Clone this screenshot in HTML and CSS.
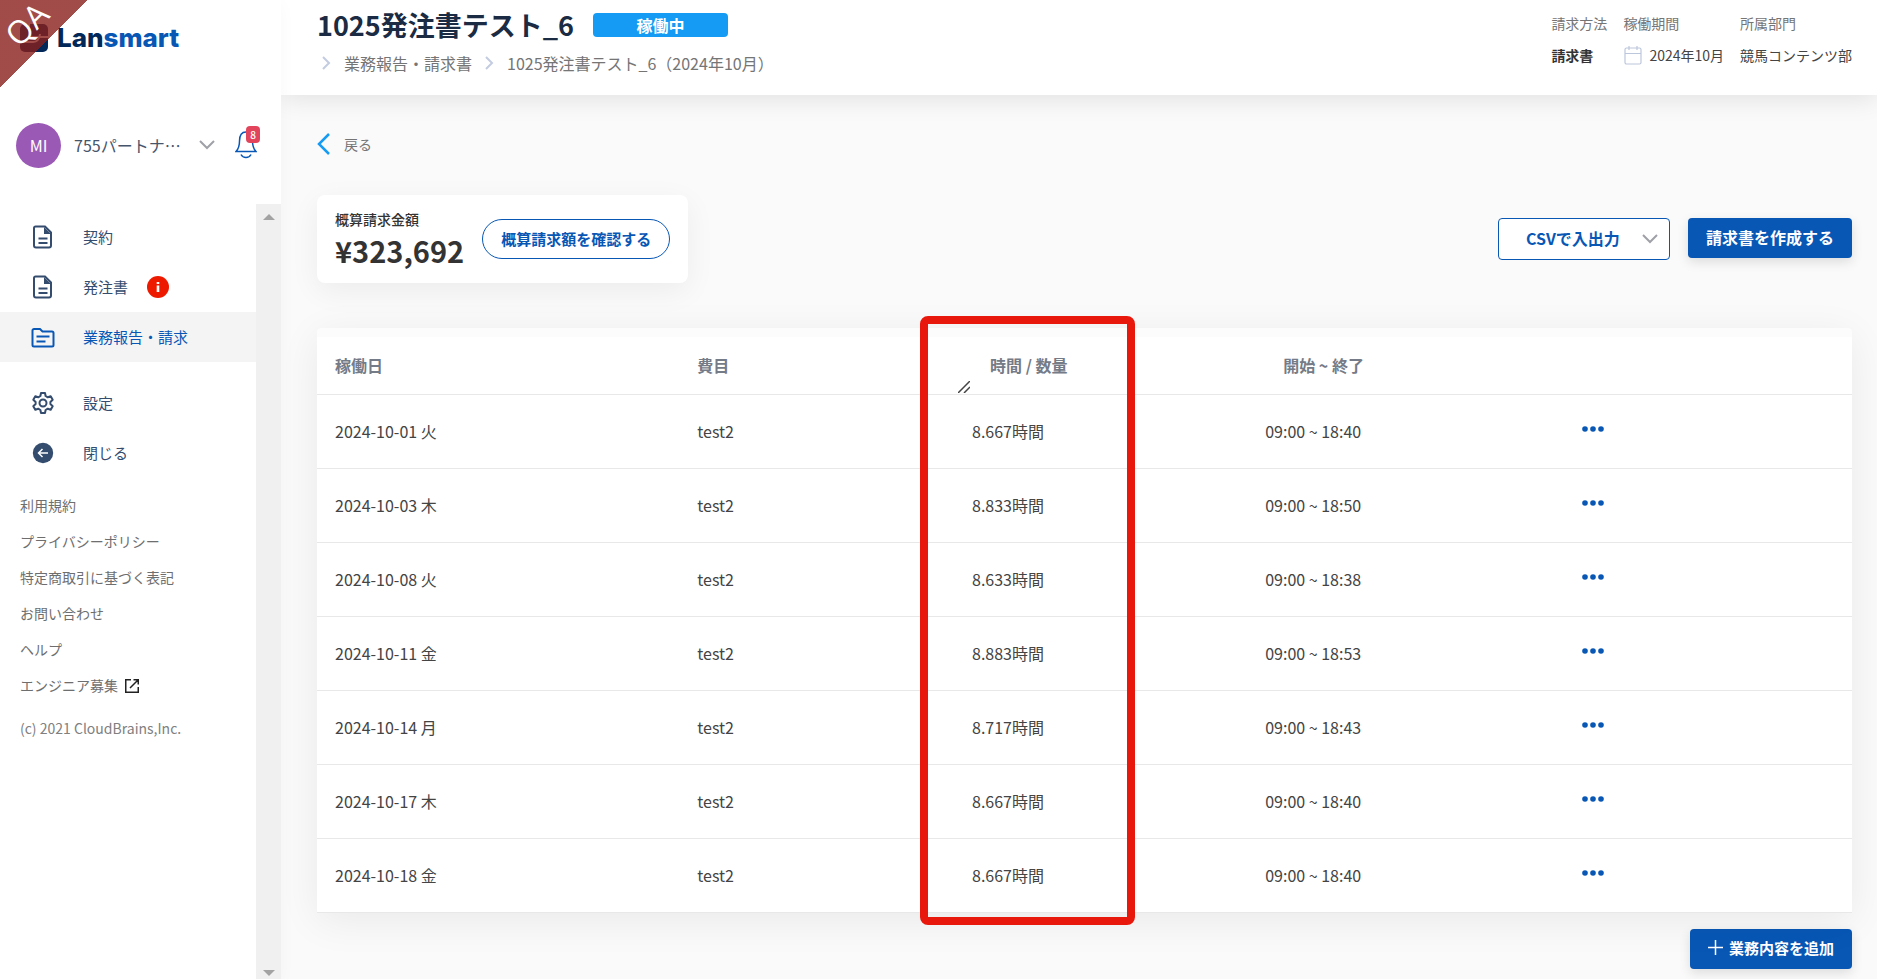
FILE: index.html
```html
<!DOCTYPE html>
<html lang="ja">
<head>
	<meta charset="utf-8">
	<title>1025発注書テスト_6 | Lansmart</title>
	<link rel="stylesheet" href="styles.css">
</head>
<body>

<div class="ribbon"><span class="ribbon-text">QA</span></div>

<div class="layout">

<aside class="sidebar">
	<div class="sidebar-top">
		<a class="logo" href="#">
			<svg width="28" height="28" viewBox="0 0 28 28"><rect width="28" height="28" rx="5" fill="#022859"/><path d="M9 0v9q0 4 4 4h15M0 18h13q6 0 7-8" fill="none" stroke="#fff" stroke-width="2"/></svg>
			<span class="logo-text">Lan<span class="logo-blue">smart</span></span>
		</a>
		<div class="user">
			<span class="avatar">MI</span>
			<button class="user-name" type="button">
				<span>755パートナ…</span>
				<svg width="16" height="10" viewBox="0 0 16 10"><path d="M1 1l7 7 7-7" fill="none" stroke="#a0a0a8" stroke-width="2"/></svg>
			</button>
			<button class="bell" type="button" aria-label="通知">
				<svg width="22" height="28" viewBox="0 0 22 28" fill="none" stroke="#0857b5" stroke-width="1.5"><path d="M1 20.500h20c-2.500-2.500-3.500-5-3.500-10.500C17.500 4 15 1 11 1S4.500 4 4.500 10c0 5.500-1 8-3.500 10.500z"/><path d="M6 23.500c2 4 8 4 10 0"/></svg>
				<span class="bell-count">8</span>
			</button>
		</div>
	</div>

	<div class="sidebar-scroll">
		<div class="sidebar-content">
			<nav class="nav">
				<a class="nav-item" href="#">
					<svg class="nav-icon" viewBox="0 0 24 24"><path d="M4.500 1.500h9.500l6 6v13a2 2 0 0 1-2 2H5a2 2 0 0 1-2-2V3a1.500 1.500 0 0 1 1.500-1.500z" fill="none" stroke="currentColor" stroke-width="2"/><path d="M13 2v7h7zM7.500 12.500h9v2h-9zM7.500 17h9v2h-9z" fill="currentColor"/></svg>
					契約
				</a>
				<a class="nav-item" href="#">
					<svg class="nav-icon" viewBox="0 0 24 24"><path d="M4.500 1.500h9.500l6 6v13a2 2 0 0 1-2 2H5a2 2 0 0 1-2-2V3a1.500 1.500 0 0 1 1.500-1.500z" fill="none" stroke="currentColor" stroke-width="2"/><path d="M13 2v7h7zM7.500 12.500h9v2h-9zM7.500 17h9v2h-9z" fill="currentColor"/></svg>
					発注書
					<svg class="nav-info" viewBox="0 0 22 22"><circle cx="11" cy="11" r="11" fill="#ee1a00"/><path d="M9.700 6h2.600v2H9.700zM9.700 9.500h2.600V16H9.700z" fill="#fff"/></svg>
				</a>
				<a class="nav-item active" href="#">
					<svg class="nav-icon" viewBox="0 0 24 24"><path d="M3 4h6l2.500 2.500H21a1.500 1.500 0 0 1 1.500 1.500v12a1.500 1.500 0 0 1-1.500 1.500H3A1.500 1.500 0 0 1 1.500 20V5.500A1.500 1.500 0 0 1 3 4z" fill="none" stroke="currentColor" stroke-width="2"/><path d="M5.500 10.500h13v2h-13zM5.500 15.500h9v2h-9z" fill="currentColor"/></svg>
					業務報告・請求
				</a>
			</nav>
			<nav class="nav">
				<a class="nav-item" href="#">
					<svg class="nav-icon" viewBox="0 0 24 24" fill="none" stroke="currentColor" stroke-width="2" stroke-linejoin="round"><path d="M10 2h4l.6 3 2.200 1.300 2.900-1 2 3.500L19.400 11v2l2.300 2.200-2 3.500-2.900-1-2.200 1.300-.6 3h-4l-.6-3-2.200-1.300-2.900 1-2-3.500L4.600 13v-2L2.300 8.800l2-3.500 2.900 1L9.400 5z"/><circle cx="12" cy="12" r="3.500"/></svg>
					設定
				</a>
				<button class="nav-item" type="button">
					<svg class="nav-icon" viewBox="0 0 24 24"><circle cx="12" cy="12" r="10.200" fill="currentColor"/><path d="M17 12H8M11.500 8l-4 4 4 4" fill="none" stroke="#fff" stroke-width="1.500"/></svg>
					閉じる
				</button>
			</nav>
			<ul class="links">
				<li><a href="#">利用規約</a></li>
				<li><a href="#">プライバシーポリシー</a></li>
				<li><a href="#">特定商取引に基づく表記</a></li>
				<li><a href="#">お問い合わせ</a></li>
				<li><a href="#">ヘルプ</a></li>
				<li><a href="#">エンジニア募集 <svg width="14" height="14" viewBox="0 0 14 14" fill="none" stroke="#222" stroke-width="1.500"><path d="M6 .75H.75v12.500h12.500V8M8.500.75h4.750V5.500M13 1L5 9"/></svg></a></li>
			</ul>
			<p class="copyright">(c) 2021 CloudBrains,Inc.</p>
		</div>
		<div class="scrollbar">
			<svg width="12" height="6" viewBox="0 0 12 6"><path d="M0 6l6-6 6 6z" fill="#a3a3a3"/></svg>
			<svg width="12" height="6" viewBox="0 0 12 6"><path d="M0 0l6 6 6-6z" fill="#a3a3a3"/></svg>
		</div>
	</div>
</aside>

<main class="main">
	<header class="page-header">
		<div>
			<div class="title-row">
				<h1 class="title">1025発注書テスト_6</h1>
				<span class="status">稼働中</span>
			</div>
			<div class="breadcrumb">
				<svg width="9" height="14" viewBox="0 0 9 14"><path d="M1 1l6 6-6 6" fill="none" stroke="#c3cce0" stroke-width="2"/></svg>
				<a href="#">業務報告・請求書</a>
				<svg width="9" height="14" viewBox="0 0 9 14"><path d="M1 1l6 6-6 6" fill="none" stroke="#c3cce0" stroke-width="2"/></svg>
				<a href="#">1025発注書テスト_6（2024年10月）</a>
			</div>
		</div>
		<dl class="meta">
			<div>
				<dt>請求方法</dt>
				<dd class="bold">請求書</dd>
			</div>
			<div>
				<dt>稼働期間</dt>
				<dd><svg width="20" height="20" viewBox="0 0 20 20" fill="none" stroke="#bcc6dc" stroke-width="1.200"><rect x="2" y="3" width="16" height="16" rx="1.500"/><path d="M2 8.500h16M6 1v4M14 1v4"/></svg>2024年10月</dd>
			</div>
			<div>
				<dt>所属部門</dt>
				<dd>競馬コンテンツ部</dd>
			</div>
		</dl>
	</header>

	<div class="content">
		<a class="back" href="#">
			<svg width="13" height="22" viewBox="0 0 13 22"><path d="M12 1L2 11l10 10" fill="none" stroke="#159bf3" stroke-width="2.500"/></svg>
			戻る
		</a>

		<div class="summary">
			<div class="amount-card">
				<div>
					<div class="amount-label">概算請求金額</div>
					<div class="amount">¥323,692</div>
				</div>
				<button class="btn-pill" type="button">概算請求額を確認する</button>
			</div>
			<div class="actions">
				<div class="csv">
					<select class="csv-select" aria-label="CSVで入出力">
						<option>CSVで入出力</option>
					</select>
					<svg class="csv-arrow" width="16" height="10" viewBox="0 0 16 10"><path d="M1 1l7 7 7-7" fill="none" stroke="#a0a0a8" stroke-width="2"/></svg>
				</div>
				<button class="btn" type="button">請求書を作成する</button>
			</div>
		</div>

		<div class="table-card">
			<table class="table">
				<colgroup>
					<col class="col-date">
					<col class="col-item">
					<col class="col-hours">
					<col class="col-time">
					<col>
				</colgroup>
				<thead>
					<tr>
						<th>稼働日</th>
						<th>費目</th>
						<th class="th-hours">
							<div class="th-inner">
								<svg width="12" height="12" viewBox="0 0 12 12"><path d="M0 12L12 0M6 12l6-6" stroke="#444" stroke-width="1.500"/></svg>
								時間 / 数量
							</div>
						</th>
						<th class="th-time">開始 ~ 終了</th>
						<th></th>
					</tr>
				</thead>
				<tbody>
					<tr>
						<td>2024-10-01 火</td>
						<td>test2</td>
						<td>8.667時間</td>
						<td>09:00 ~ 18:40</td>
						<td><button class="more" type="button" aria-label="メニュー"><svg width="22" height="6" viewBox="0 0 22 6" fill="#0857b5"><circle cx="3" cy="3" r="2.800"/><circle cx="11" cy="3" r="2.800"/><circle cx="19" cy="3" r="2.800"/></svg></button></td>
					</tr>
					<tr>
						<td>2024-10-03 木</td>
						<td>test2</td>
						<td>8.833時間</td>
						<td>09:00 ~ 18:50</td>
						<td><button class="more" type="button" aria-label="メニュー"><svg width="22" height="6" viewBox="0 0 22 6" fill="#0857b5"><circle cx="3" cy="3" r="2.800"/><circle cx="11" cy="3" r="2.800"/><circle cx="19" cy="3" r="2.800"/></svg></button></td>
					</tr>
					<tr>
						<td>2024-10-08 火</td>
						<td>test2</td>
						<td>8.633時間</td>
						<td>09:00 ~ 18:38</td>
						<td><button class="more" type="button" aria-label="メニュー"><svg width="22" height="6" viewBox="0 0 22 6" fill="#0857b5"><circle cx="3" cy="3" r="2.800"/><circle cx="11" cy="3" r="2.800"/><circle cx="19" cy="3" r="2.800"/></svg></button></td>
					</tr>
					<tr>
						<td>2024-10-11 金</td>
						<td>test2</td>
						<td>8.883時間</td>
						<td>09:00 ~ 18:53</td>
						<td><button class="more" type="button" aria-label="メニュー"><svg width="22" height="6" viewBox="0 0 22 6" fill="#0857b5"><circle cx="3" cy="3" r="2.800"/><circle cx="11" cy="3" r="2.800"/><circle cx="19" cy="3" r="2.800"/></svg></button></td>
					</tr>
					<tr>
						<td>2024-10-14 月</td>
						<td>test2</td>
						<td>8.717時間</td>
						<td>09:00 ~ 18:43</td>
						<td><button class="more" type="button" aria-label="メニュー"><svg width="22" height="6" viewBox="0 0 22 6" fill="#0857b5"><circle cx="3" cy="3" r="2.800"/><circle cx="11" cy="3" r="2.800"/><circle cx="19" cy="3" r="2.800"/></svg></button></td>
					</tr>
					<tr>
						<td>2024-10-17 木</td>
						<td>test2</td>
						<td>8.667時間</td>
						<td>09:00 ~ 18:40</td>
						<td><button class="more" type="button" aria-label="メニュー"><svg width="22" height="6" viewBox="0 0 22 6" fill="#0857b5"><circle cx="3" cy="3" r="2.800"/><circle cx="11" cy="3" r="2.800"/><circle cx="19" cy="3" r="2.800"/></svg></button></td>
					</tr>
					<tr>
						<td>2024-10-18 金</td>
						<td>test2</td>
						<td>8.667時間</td>
						<td>09:00 ~ 18:40</td>
						<td><button class="more" type="button" aria-label="メニュー"><svg width="22" height="6" viewBox="0 0 22 6" fill="#0857b5"><circle cx="3" cy="3" r="2.800"/><circle cx="11" cy="3" r="2.800"/><circle cx="19" cy="3" r="2.800"/></svg></button></td>
					</tr>
				</tbody>
			</table>
			<div class="highlight"></div>
		</div>

		<div class="footer-actions">
			<button class="btn btn-add" type="button">
				<svg width="15" height="15" viewBox="0 0 15 15"><path d="M7.500 0v15M0 7.500h15" stroke="#fff" stroke-width="1.500"/></svg>
				業務内容を追加
			</button>
		</div>
	</div>
</main>

</div>

</body>
</html>
```
FILE: styles.css
```css
* {
	box-sizing: border-box;
}

body {
	margin: 0;
	background: #fafafa;
	color: #444;
	font-family: "Noto Sans CJK JP", sans-serif;
	font-size: 16px;
	line-height: 24px;
}

a {
	color: inherit;
	text-decoration: none;
}

button,
select {
	font-family: inherit;
	cursor: pointer;
}

svg {
	flex-shrink: 0;
}

.layout {
	display: flex;
	min-height: 100vh;
}

/* corner ribbon */
.ribbon {
	position: absolute;
	top: 0;
	left: 0;
	z-index: 10;
	width: 88px;
	height: 88px;
	background: linear-gradient(135deg, rgba(137, 31, 27, 0.8) 50%, transparent 50%);
	pointer-events: none;
}

.ribbon-text {
	position: absolute;
	top: 14px;
	left: 4px;
	color: #fff;
	font-family: "Open Sans", sans-serif;
	font-size: 32px;
	font-weight: 500;
	line-height: 20px;
	transform: rotate(-45deg);
}

/* sidebar */
.sidebar {
	position: relative;
	z-index: 1;
	display: flex;
	flex-direction: column;
	flex-shrink: 0;
	width: 281px;
	background: #fff;
	box-shadow: 0 4px 16px rgba(0, 0, 0, 0.03);
}

.sidebar-top {
	height: 204px;
	padding: 24px 16px 0;
}

.logo {
	display: flex;
	align-items: center;
	gap: 9px;
	height: 28px;
	padding-left: 4px;
}

.logo-text {
	color: #022859;
	font-family: Inter, sans-serif;
	font-size: 26px;
	font-weight: 800;
}

.logo-blue {
	color: #0857b5;
}

.user {
	display: flex;
	align-items: center;
	margin-top: 71px;
}

.avatar {
	width: 45px;
	height: 45px;
	border-radius: 50%;
	background: #9b59b6;
	color: #fff;
	line-height: 45px;
	text-align: center;
}

.user-name {
	display: flex;
	flex: 1;
	align-items: center;
	justify-content: space-between;
	padding: 0 20px 2px 13px;
	border: 0;
	background: none;
	color: #46556b;
	font-size: 16px;
	line-height: 24px;
}

.bell {
	position: relative;
	display: flex;
	width: 30px;
	padding: 0 0 2px;
	border: 0;
	background: none;
}

.bell-count {
	position: absolute;
	top: -5px;
	left: 11px;
	width: 14px;
	height: 17px;
	border-radius: 4px;
	background: #e2445c;
	color: #fff;
	font-size: 10px;
	font-weight: 500;
	line-height: 17px;
	text-align: center;
}

.sidebar-scroll {
	display: flex;
	flex: 1;
}

.sidebar-content {
	flex: 1;
	padding-top: 8px;
}

.nav {
	margin-bottom: 16px;
}

.nav-item {
	display: flex;
	align-items: center;
	width: 100%;
	height: 50px;
	padding: 0 31px;
	border: 0;
	background: none;
	color: #344d6e;
	font-size: 15px;
	line-height: 24px;
}

.nav-item.active {
	background: #f4f4f4;
	color: #0857b5;
}

.nav-icon {
	width: 24px;
	height: 24px;
	margin-right: 28px;
}

.nav-info {
	width: 22px;
	height: 22px;
	margin-left: 19px;
}

.links {
	margin: 0;
	padding: 0 20px;
	color: #6e6e6e;
	font-size: 14px;
	line-height: 36px;
	list-style: none;
}

.links svg {
	margin-left: 4px;
	vertical-align: -2px;
}

.nav + .links {
	margin-top: -7px;
}

.copyright {
	margin: 7px 0 0;
	padding: 0 20px;
	color: #808080;
	font-size: 14px;
	line-height: 36px;
}

.scrollbar {
	display: flex;
	flex-direction: column;
	align-items: center;
	justify-content: space-between;
	width: 25px;
	padding: 10px 0 3px;
	background: #f0f0f0;
}

/* page header */
.main {
	flex: 1;
	min-width: 0;
}

.page-header {
	display: flex;
	justify-content: space-between;
	height: 95px;
	padding: 5px 25px 0 36px;
	background: #fff;
	box-shadow: 0 4px 24px rgba(0, 0, 0, 0.1);
}

.title-row {
	display: flex;
	align-items: center;
	gap: 19px;
}

.title {
	margin: 0;
	color: #1b2b43;
	font-size: 27px;
	font-weight: 700;
	line-height: 40px;
}

.status {
	width: 135px;
	border-radius: 4px;
	background: #159bf3;
	color: #fff;
	font-weight: 700;
	line-height: 24px;
	text-align: center;
}

.breadcrumb {
	display: flex;
	align-items: center;
	gap: 13px;
	margin-top: 6px;
	padding-left: 5px;
	color: #757575;
}

.meta {
	display: flex;
	gap: 16px;
	margin: 2px 0 0;
	font-size: 14px;
	line-height: 32px;
}

.meta dt {
	color: #757575;
}

.meta dd {
	display: flex;
	align-items: center;
	gap: 6px;
	margin: 0;
}

.meta .bold {
	color: #333;
	font-weight: 700;
}

/* content */
.content {
	padding: 34px 25px 10px 36px;
}

.back {
	display: flex;
	align-items: center;
	gap: 14px;
	width: 60px;
	height: 30px;
	color: #757575;
	font-size: 14px;
}

.summary {
	display: flex;
	align-items: center;
	justify-content: space-between;
	margin-top: 36px;
}

.amount-card {
	display: flex;
	align-items: center;
	gap: 18px;
	padding: 13px 18px;
	border-radius: 8px;
	background: #fff;
	box-shadow: 0 8px 30px rgba(0, 0, 0, 0.06);
}

.amount-label {
	color: #333;
	font-size: 14px;
	font-weight: 500;
	line-height: 22px;
}

.amount {
	color: #333;
	font-size: 29px;
	font-weight: 700;
	line-height: 40px;
}

.btn-pill {
	height: 40px;
	padding: 0 18px 2px;
	border: 1px solid #0857b5;
	border-radius: 20px;
	background: #fff;
	color: #0857b5;
	font-size: 15px;
	font-weight: 700;
}

.actions {
	display: flex;
	align-items: flex-start;
	gap: 18px;
}

.csv {
	display: grid;
	align-items: center;
	width: 172px;
}

.csv-select {
	grid-area: 1 / 1;
	height: 42px;
	padding: 0 27px 2px;
	border: 1px solid #0857b5;
	border-radius: 4px;
	background: #fff;
	color: #0857b5;
	font-size: 16px;
	font-weight: 700;
	appearance: none;
}

.csv-arrow {
	grid-area: 1 / 1;
	justify-self: end;
	margin-right: 12px;
	pointer-events: none;
}

.btn {
	height: 40px;
	padding: 0 18px 2px;
	border: 0;
	border-radius: 4px;
	background: #0857b5;
	box-shadow: 0 4px 12px rgba(0, 0, 0, 0.12);
	color: #fff;
	font-size: 16px;
	font-weight: 700;
}

.btn-add {
	display: flex;
	align-items: center;
	gap: 6px;
	font-size: 15px;
}

/* work table */
.table-card {
	position: relative;
	margin-top: 45px;
	padding-top: 9px;
	border-radius: 4px 4px 0 0;
	background: #fcfcfc;
	box-shadow: 0 8px 40px rgba(0, 0, 0, 0.07);
}

.table {
	width: 100%;
	border-collapse: collapse;
	background: #fff;
	table-layout: fixed;
}

.col-date {
	width: 23.6%;
}

.col-item {
	width: 17.9%;
}

.col-hours {
	width: 19.1%;
}

.col-time {
	width: 20.6%;
}

.table th,
.table td {
	padding: 0 18px;
	border-bottom: 1px solid #e8e8e8;
	text-align: left;
}

.table th {
	height: 57px;
	color: #757b87;
	font-weight: 700;
}

.table td {
	height: 74px;
}

.table .th-hours {
	padding: 0 4px;
}

.table .th-time {
	padding-left: 36px;
}

.th-inner {
	display: flex;
	align-items: center;
	gap: 20px;
}

.th-inner svg {
	align-self: flex-end;
	margin: 0 0 -16px;
}

.more {
	display: flex;
	padding: 4px 1px 8px;
	border: 0;
	background: none;
}

.highlight {
	position: absolute;
	top: -12px;
	bottom: -12px;
	left: 39.3%;
	width: 14%;
	border: 8px solid #e8190c;
	border-radius: 8px;
	pointer-events: none;
}

.footer-actions {
	display: flex;
	justify-content: flex-end;
	margin-top: 16px;
}
```
